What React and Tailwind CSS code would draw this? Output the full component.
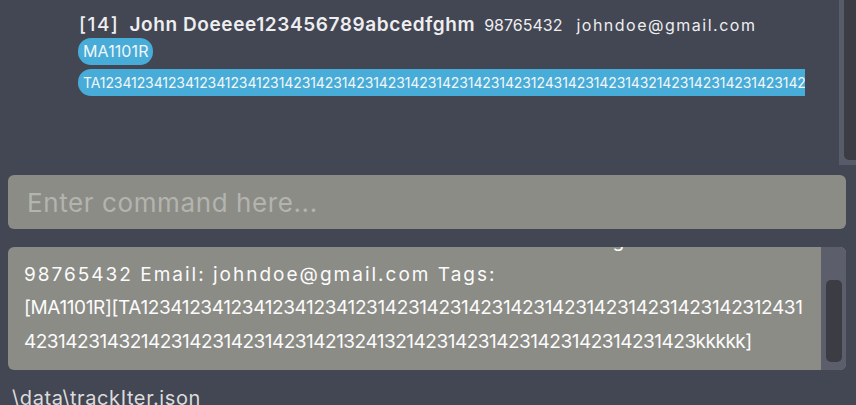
import React from "react";

const FONT = { fontFamily: "Inter, 'Open Sans', sans-serif" };

export default function App() {
  return (
    <div
      className="w-[856px] h-[405px] bg-[#434653] overflow-hidden flex flex-col text-white"
      style={FONT}
    >
      {/* person list panel */}
      <div className="h-[165px] flex shrink-0">
        <div className="flex-1 min-w-0 pl-[78px] pt-[11px]">
          <div className="w-[727px] overflow-hidden flex flex-col">
            <div className="flex items-baseline whitespace-nowrap h-[27px]">
              <span className="text-[19px] font-medium tracking-[1.5px] text-[#eeeef0] pl-[1px]">[14]</span>
              <span className="text-[19px] font-semibold tracking-[0.6px] text-[#eeeef0] ml-[10px]">
                John Doeeee123456789abcedfghm
              </span>
              <span className="text-[16px] text-[#eeeef0] ml-[9px]">98765432</span>
              <span className="text-[16px] tracking-[1.5px] text-[#eeeef0] ml-[14px]">johndoe@gmail.com</span>
            </div>
            <div className="flex">
              <span className="h-[27px] pl-[5px] pr-[4px] rounded-[13px] bg-[#47acd8] text-[16px] tracking-[0.1px] leading-[27px] text-[#f2f6f8] whitespace-nowrap">
                MA1101R
              </span>
            </div>
            <div className="flex mt-[4px]">
              <span className="h-[27px] pl-[5px] pr-[40px] rounded-[13px] bg-[#47acd8] text-[14px] tracking-[-0.1px] leading-[27px] text-[#f2f6f8] whitespace-nowrap">
                TA12341234123412341234123142314231423142314231423142314231243142314231432142314231423142314231421324132142314231423142314231423kkkkk
              </span>
            </div>
          </div>
        </div>
        <div className="w-[17px] bg-[#585b6a] pl-[5px] pb-[5px] shrink-0">
          <div className="h-full bg-[#3c3d44] rounded-bl-[5px]" />
        </div>
      </div>

      {/* command box */}
      <div className="mt-[10px] ml-[8px] w-[838px] h-[54px] rounded-[6px] bg-[#8b8c86] flex items-center pl-[19px] shrink-0">
        <span className="text-[26px] tracking-[0.6px] text-[#b3b4ae] whitespace-nowrap">Enter command here...</span>
      </div>

      {/* result box */}
      <div className="mt-[18px] ml-[8px] w-[838px] h-[123px] rounded-[6px] bg-[#8b8c86] flex overflow-hidden shrink-0">
        <div className="flex-1 min-w-0 overflow-hidden pl-[16px]">
          <div className="-mt-[23px] text-[19px] leading-[33.5px] text-[#fbfbfb] whitespace-nowrap">
            <div className="tracking-[1.8px]">New TA member added: John Doeeee123456789abcedfghm Phone:</div>
            <div className="tracking-[2px]">98765432 Email: johndoe@gmail.com Tags:</div>
            <div className="tracking-[-0.38px]">[MA1101R][TA1234123412341234123412314231423142314231423142314231423142312431</div>
            <div className="tracking-[-0.5px]">42314231432142314231423142314213241321423142314231423142314231423kkkkk]</div>
          </div>
        </div>
        <div className="w-[25px] bg-[#5c5e6c] pl-[5px] pr-[4px] pt-[33px] pb-[8px] shrink-0">
          <div className="h-full bg-[#3c3d44] rounded-[5px]" />
        </div>
      </div>

      {/* status bar */}
      <div className="mt-[13px] ml-[12px] text-[20px] tracking-[0.6px] text-[#dcdcdc] whitespace-nowrap shrink-0">
        {"\\data\\trackIter.json"}
      </div>
    </div>
  );
}
